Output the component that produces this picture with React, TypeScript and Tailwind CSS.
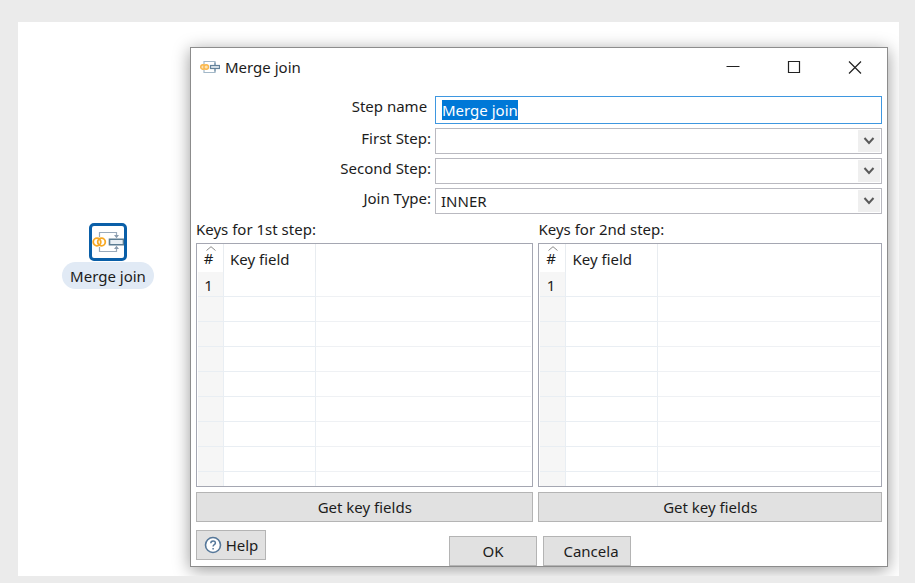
import { useEffect, useRef } from "react";
import type { ReactNode } from "react";

function MergeJoinIcon({ className }: { className: string }) {
  return (
    <svg viewBox="0 0 32 28" className={className} fill="none" aria-hidden="true">
      <path d="M7.500 9V4.500h17V9M7.500 19v4.500h17V19" stroke="#9aaabb" strokeWidth="1.200" />
      <path d="M22 7h5l-2.500 3.200zM22 21h5l-2.500-3.200z" fill="#8a9cae" />
      <circle cx="5" cy="14" r="3.800" stroke="#f7a823" strokeWidth="1.800" />
      <circle cx="9.500" cy="14" r="3.800" stroke="#f7a823" strokeWidth="1.800" />
      <path d="M31.500 11.300h-14v5.400h14z" fill="#e9eff4" stroke="#5c7d93" strokeWidth="1.600" />
    </svg>
  );
}

function TitleIcon() {
  return (
    <svg viewBox="0 0 20 14" className="h-3.5 w-5" fill="none" aria-hidden="true">
      <path d="M4 4V1.500h11V5M4 10v2.500h11V9" stroke="#a3b8c8" strokeWidth="1.200" />
      <path d="M15 2.500v9" stroke="#7f9bb0" strokeWidth="1.500" />
      <circle cx="3" cy="7" r="2.300" fill="#fde3b5" stroke="#f9b64a" strokeWidth="1.400" />
      <circle cx="6.200" cy="7" r="2.300" fill="#fde3b5" stroke="#f9b64a" strokeWidth="1.400" />
      <rect x="10.500" y="5.500" width="9" height="3" fill="#dfe8ef" stroke="#64829a" strokeWidth="1.200" />
    </svg>
  );
}

function Field({ id, label, children }: { id: string; label: string; children: ReactNode }) {
  return (
    <div className="grid grid-cols-[235px_minmax(0,1fr)] gap-x-1">
      <label htmlFor={id} className="text-right leading-5 whitespace-pre">
        {label}
      </label>
      {children}
    </div>
  );
}

function Dropdown({ id, label, options }: { id: string; label: string; options: string[] }) {
  return (
    <Field id={id} label={label}>
      <div className="relative">
        <select
          id={id}
          className="block h-[26px] w-full appearance-none border border-[#b9b9c0] bg-white pl-[5px] pr-7 outline-none"
        >
          {options.map((option) => (
            <option key={option}>{option}</option>
          ))}
        </select>
        <span className="pointer-events-none absolute inset-y-0.5 right-0.5 flex w-[22px] items-center justify-center bg-[#efefef]">
          <svg viewBox="0 0 12 8" className="h-2 w-3" fill="none" aria-hidden="true">
            <path d="m1.500 1 4.500 5 4.500-5" stroke="#5a5a5a" strokeWidth="2" />
          </svg>
        </span>
      </div>
    </Field>
  );
}

const button =
  "border border-[#b4b4b4] bg-[#e1e1e1] h-[30px] flex items-center justify-center leading-5 pb-px";

const emptyRows = [2, 3, 4, 5, 6, 7, 8];

function KeyPanel({ title }: { title: string }) {
  return (
    <section className="min-w-0">
      <h2 className="leading-5">{title}</h2>
      <div className="mt-1 h-[244px] overflow-hidden border border-[#a5a7b2] px-px">
        <table className="w-full table-fixed border-separate border-spacing-0 text-left">
          <thead>
            <tr className="h-[28px]">
              <th className="w-[26px] border-r border-[#e8ecf0] p-0 pb-1.5 text-center font-normal">
                <svg viewBox="0 0 10 5" className="mx-auto mt-0.5 h-[5px] w-2.5" fill="none" aria-hidden="true">
                  <path d="M.5 4.500 5 .7l4.500 3.800" stroke="#8a8a8a" />
                </svg>
                <span className="block pr-1 leading-[15px]">#</span>
              </th>
              <th className="w-[92px] border-r border-[#e8ecf0] px-1.5 pt-0.5 font-normal leading-5">Key field</th>
              <th className="p-0" />
            </tr>
          </thead>
          <tbody>
            <tr className="h-[25px]">
              <td className="border-r border-b border-[#e9eef3] bg-[#f6f6f6] p-0 pt-0.5 pr-1 text-center leading-5">1</td>
              <td className="border-r border-b border-[#e9eef3] p-0" />
              <td className="border-b border-[#eff1f4] p-0" />
            </tr>
            {emptyRows.map((row) => (
              <tr key={row} className="h-[25px]">
                <td className="border-r border-b border-[#e9eef3] bg-[#f6f6f6] p-0" />
                <td className="border-r border-b border-[#e9eef3] p-0" />
                <td className="border-b border-[#eff1f4] p-0" />
              </tr>
            ))}
            <tr className="h-[14px]">
              <td className="border-r border-[#e9eef3] bg-[#f6f6f6] p-0" />
              <td className="border-r border-[#e9eef3] p-0" />
              <td className="p-0" />
            </tr>
          </tbody>
        </table>
      </div>
      <button type="button" className={`${button} mt-[5px] w-full`}>
        Get key fields
      </button>
    </section>
  );
}

export default function App() {
  const nameInput = useRef<HTMLInputElement>(null);

  useEffect(() => {
    nameInput.current?.focus();
    nameInput.current?.select();
  }, []);

  return (
    <main className="min-h-screen bg-[#ebebeb] pt-[22px] pr-4 pb-[7px] pl-[18px] font-['Noto_Sans','Open_Sans',sans-serif] text-[15px] text-[#1c1c1c]">
      <div className="flex overflow-hidden bg-white">
        <div className="w-[172px] shrink-0 pt-[201px] pl-11">
          <div className="flex w-[92px] flex-col items-center gap-px">
            <div className="flex size-[38px] items-center justify-center rounded-[5px] border-3 border-[#0a5fa8] bg-white">
              <MergeJoinIcon className="h-7 w-8" />
            </div>
            <span className="w-full rounded-full bg-[#e1eaf5] pt-1 pb-[3px] text-center leading-5">Merge join</span>
          </div>
        </div>

        <div
          role="dialog"
          aria-labelledby="dialog-title"
          className="mt-[25px] mr-[11px] mb-[9px] min-w-0 flex-1 border border-[#8c8c8c] bg-white shadow-[0_3px_16px_rgba(0,0,0,0.4)]"
        >
          <header className="flex h-10 items-center pr-0.5 pb-0.5 pl-[9px]">
            <TitleIcon />
            <h1 id="dialog-title" className="ml-[5px] flex-1 leading-5">
              Merge join
            </h1>
            <button type="button" aria-label="Minimize" className="flex h-full w-[61px] items-center justify-center">
              <svg viewBox="0 0 14 14" className="size-3.5" fill="none" stroke="#222">
                <path d="M.5 6.500h13" />
              </svg>
            </button>
            <button type="button" aria-label="Maximize" className="flex h-full w-[61px] items-center justify-center">
              <svg viewBox="0 0 14 14" className="size-3.5" fill="none" stroke="#222" strokeWidth="1.200">
                <path d="M1.500 1.500h11v11h-11z" />
              </svg>
            </button>
            <button type="button" aria-label="Close" className="flex h-full w-[61px] items-center justify-center">
              <svg viewBox="0 0 14 14" className="size-3.5" fill="none" stroke="#222" strokeWidth="1.200">
                <path d="m1 1.500 12 12M13 1.500 1 13.500" />
              </svg>
            </button>
          </header>

          <form className="px-[5px] pt-2" onSubmit={(event) => event.preventDefault()}>
            <div className="flex flex-col gap-1">
              <Field id="step-name" label="Step name ">
                <input
                  id="step-name"
                  ref={nameInput}
                  defaultValue="Merge join"
                  className="h-[28px] w-full border border-[#3e97e0] bg-white px-1.5 leading-5 outline-none selection:bg-[#0078d7] selection:text-white"
                />
              </Field>
              <Dropdown id="first-step" label="First Step:" options={[""]} />
              <Dropdown id="second-step" label="Second Step:" options={[""]} />
              <Dropdown id="join-type" label="Join Type:" options={["INNER", "LEFT OUTER", "RIGHT OUTER", "FULL OUTER"]} />
            </div>

            <div className="mt-[5px] grid grid-cols-[337fr_343fr] gap-x-[5px]">
              <KeyPanel title="Keys for 1st step:" />
              <KeyPanel title="Keys for 2nd step:" />
            </div>

            <div className="mt-2 grid grid-cols-[1fr_auto_1fr] items-start">
              <button type="button" className={`${button} w-[70px] gap-1`}>
                <svg viewBox="0 0 18 18" className="size-[18px] shrink-0" fill="none" aria-hidden="true">
                  <circle cx="9" cy="9" r="7.500" fill="#fff" stroke="#56789a" strokeWidth="1.600" />
                  <path d="M6.800 7.200c0-3 4.600-3 4.600-.2 0 1.600-2.300 1.700-2.300 3.400M9.100 12v1.500" stroke="#56789a" strokeWidth="1.500" />
                </svg>
                Help
              </button>
              <div className="flex gap-1.5 pt-1.5 pl-0.5">
                <button type="submit" className={`${button} w-[88px]`}>
                  OK
                </button>
                <button type="button" className={`${button} w-[88px] pl-2`}>
                  Cancela
                </button>
              </div>
            </div>
          </form>
        </div>
      </div>
    </main>
  );
}
